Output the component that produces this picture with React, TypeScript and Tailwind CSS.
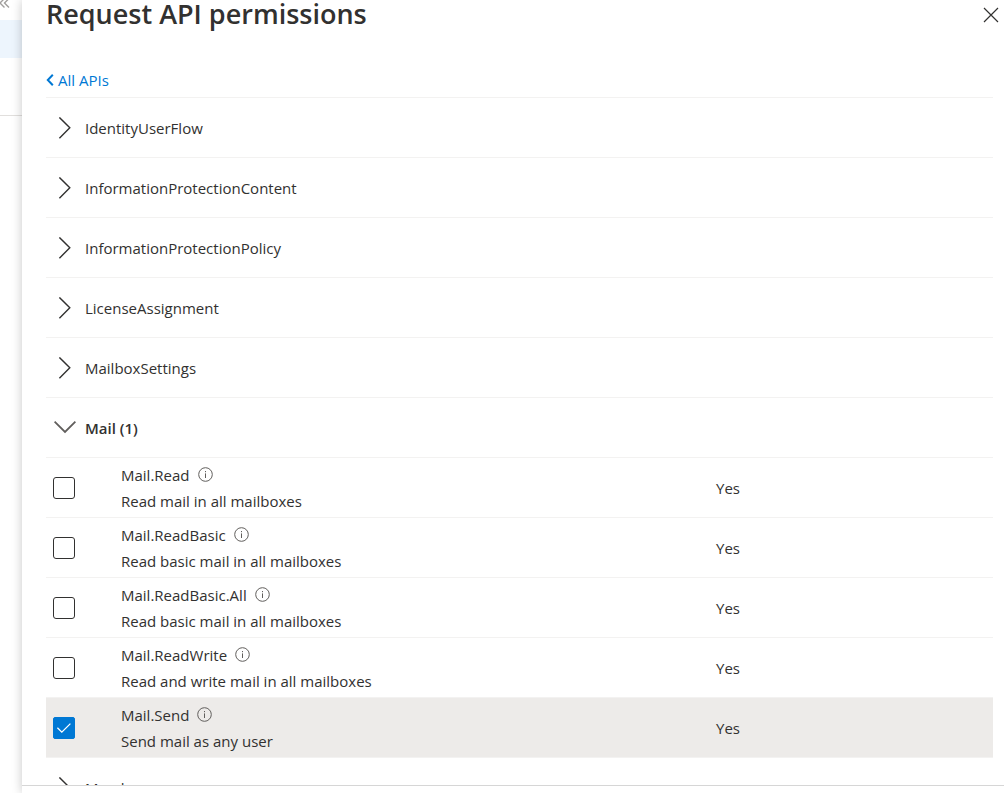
import { useState } from "react";

type Permission = { name: string; description: string; consent: string };
type Group = { name: string; permissions?: Permission[] };

const groups: Group[] = [
  { name: "IdentityUserFlow" },
  { name: "InformationProtectionContent" },
  { name: "InformationProtectionPolicy" },
  { name: "LicenseAssignment" },
  { name: "MailboxSettings" },
  {
    name: "Mail",
    permissions: [
      { name: "Mail.Read", description: "Read mail in all mailboxes", consent: "Yes" },
      { name: "Mail.ReadBasic", description: "Read basic mail in all mailboxes", consent: "Yes" },
      { name: "Mail.ReadBasic.All", description: "Read basic mail in all mailboxes", consent: "Yes" },
      { name: "Mail.ReadWrite", description: "Read and write mail in all mailboxes", consent: "Yes" },
      { name: "Mail.Send", description: "Send mail as any user", consent: "Yes" },
    ],
  },
  { name: "Member" },
];

function Chevron({ open }: { open: boolean }) {
  return open ? (
    <svg width="22" height="22" viewBox="0 0 22 22" fill="none" stroke="#605e5c" strokeWidth="1.8" aria-hidden="true">
      <path d="M.6 4.6 11 15 21.4 4.6" />
    </svg>
  ) : (
    <svg width="22" height="22" viewBox="0 0 22 22" fill="none" stroke="#323130" strokeWidth="1.4" aria-hidden="true">
      <path d="M5.4.4 15.8 10.8 5.4 21.2" />
    </svg>
  );
}

function InfoIcon() {
  return (
    <svg width="15" height="15" viewBox="0 0 15 15" fill="none" stroke="#605e5c" aria-hidden="true">
      <circle cx="7.5" cy="7.5" r="6.8" />
      <path d="M7.5 6.4v4.6M7.5 4v1.2" />
    </svg>
  );
}

function PermissionRow({
  permission,
  checked,
  onToggle,
}: {
  permission: Permission;
  checked: boolean;
  onToggle: () => void;
}) {
  const id = permission.name;
  return (
    <tr className={checked ? "bg-[#edebe9]" : "bg-white"}>
      <td className="h-[60px] w-[75px] border-t border-[#f3f2f1] p-0 pl-[7px]">
        <span className="grid size-[22px]">
          <input
            id={id}
            type="checkbox"
            checked={checked}
            onChange={onToggle}
            className="peer col-start-1 row-start-1 size-[22px] appearance-none rounded-[3px] border border-[#323130] bg-white checked:rounded-[2px] checked:border-[#0078d4] checked:bg-[#0078d4]"
          />
          <svg
            viewBox="0 0 22 22"
            fill="none"
            stroke="#fff"
            strokeWidth="1.3"
            className="pointer-events-none invisible col-start-1 row-start-1 size-[22px] peer-checked:visible"
            aria-hidden="true"
          >
            <path d="M4.4 10.8 8.8 15.2 17.4 6.6" />
          </svg>
        </span>
      </td>
      <td className="border-t border-[#f3f2f1] p-0">
        <div className="flex items-center gap-2 leading-[26px]">
          <label htmlFor={id}>{permission.name}</label>
          <InfoIcon />
        </div>
        <div className="leading-[26px]">{permission.description}</div>
      </td>
      <td className="w-[277px] border-t border-[#f3f2f1] p-0 pt-px">{permission.consent}</td>
    </tr>
  );
}

export default function App() {
  const [open, setOpen] = useState<Record<string, boolean>>({ Mail: true });
  const [selected, setSelected] = useState<Record<string, boolean>>({ "Mail.Send": true });

  return (
    <div className="flex h-screen overflow-hidden bg-white font-['Open_Sans','Noto_Sans',sans-serif] text-[15px] text-[#323130]">
      <aside className="w-[22px] shrink-0 overflow-hidden">
        <button type="button" aria-label="Collapse menu" className="block h-5 w-full">
          <svg width="10" height="20" viewBox="0 0 10 20" fill="none" stroke="#a19f9d" strokeWidth="1.4" aria-hidden="true">
            <path d="M4.5-1.5 0 3l4.5 4.5M9-1.5 4.5 3 9 7.5" />
          </svg>
        </button>
        <div className="h-[38px] bg-[#edf5fd]" />
        <div className="h-[58px] border-b border-[#e1dfdd]" />
      </aside>

      <main className="z-10 flex min-w-0 flex-1 flex-col bg-white shadow-[0_0_10px_rgba(0,0,0,0.22)]">
        <header className="flex items-start justify-between pr-[5px] pl-6">
          <h1 className="text-[27px] leading-[28px] font-semibold">Request API permissions</h1>
          <button type="button" aria-label="Close" className="pt-[7px]">
            <svg width="16" height="16" viewBox="0 0 16 16" fill="none" stroke="#323130" strokeWidth="1.2" aria-hidden="true">
              <path d="M1 1l14 14M15 1 1 15" />
            </svg>
          </button>
        </header>

        <div className="flex px-6 pt-10 pb-[5px]">
          <a href="#apis" className="flex items-center gap-1 leading-6 text-[#0078d4]">
            <svg width="8" height="12" viewBox="0 0 8 12" fill="none" stroke="currentColor" strokeWidth="2" aria-hidden="true">
              <path d="M6.8.8 1.8 6l5 5.2" />
            </svg>
            All APIs
          </a>
        </div>

        <div className="min-h-0 flex-1 overflow-hidden pr-[11px] pl-6">
          {groups.map((group) => {
            const isOpen = !!open[group.name];
            const count = (group.permissions ?? []).filter((p) => selected[p.name]).length;
            return (
              <section key={group.name}>
                <button
                  type="button"
                  aria-expanded={isOpen}
                  onClick={() => setOpen({ ...open, [group.name]: !isOpen })}
                  className="flex h-[60px] w-full items-center gap-[9px] border-t border-[#f3f2f1] pl-2 text-left"
                >
                  <Chevron open={isOpen} />
                  <span className={count ? "pt-0.5 font-semibold" : "pt-0.5"}>
                    {group.name}
                    {count ? ` (${count})` : ""}
                  </span>
                </button>
                {isOpen && group.permissions && (
                  <table className="w-full table-fixed border-separate border-spacing-0 text-left">
                    <tbody>
                      {group.permissions.map((p) => (
                        <PermissionRow
                          key={p.name}
                          permission={p}
                          checked={!!selected[p.name]}
                          onToggle={() => setSelected({ ...selected, [p.name]: !selected[p.name] })}
                        />
                      ))}
                    </tbody>
                  </table>
                )}
              </section>
            );
          })}
        </div>

        <footer className="h-2 shrink-0 border-t border-[#d6d6d6]" />
      </main>
    </div>
  );
}
